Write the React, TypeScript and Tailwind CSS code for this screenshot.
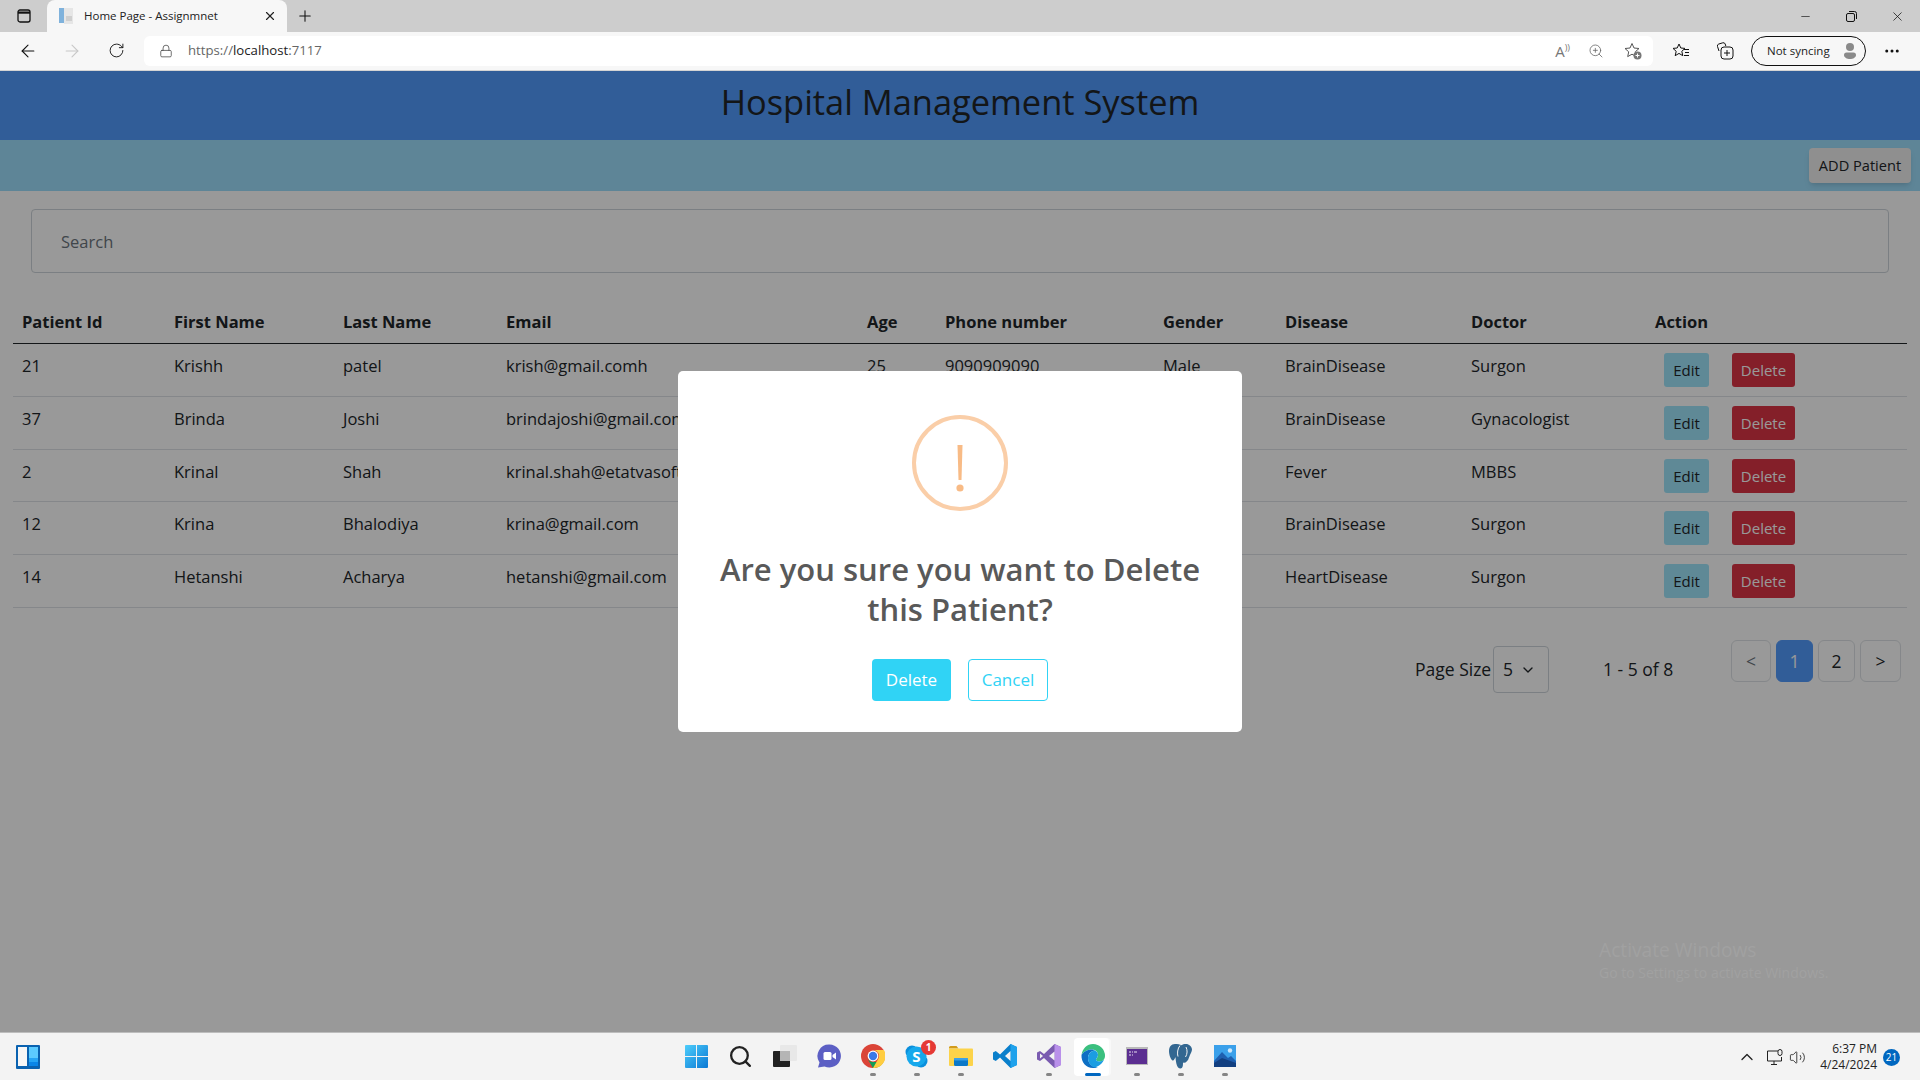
import { ArrowLeft, ArrowRight, ChevronDown, ChevronUp, Lock, Minus, MoreHorizontal, Plus, RotateCw, Search, Volume2, X, ZoomIn } from 'lucide-react';

const patients = [
  { id: 21, first: 'Krishh', last: 'patel', email: 'krish@gmail.comh', age: '25', phone: '9090909090', gender: 'Male', disease: 'BrainDisease', doctor: 'Surgon' },
  { id: 37, first: 'Brinda', last: 'Joshi', email: 'brindajoshi@gmail.com', disease: 'BrainDisease', doctor: 'Gynacologist' },
  { id: 2, first: 'Krinal', last: 'Shah', email: 'krinal.shah@etatvasoft.com', disease: 'Fever', doctor: 'MBBS' },
  { id: 12, first: 'Krina', last: 'Bhalodiya', email: 'krina@gmail.com', disease: 'BrainDisease', doctor: 'Surgon' },
  { id: 14, first: 'Hetanshi', last: 'Acharya', email: 'hetanshi@gmail.com', disease: 'HeartDisease', doctor: 'Surgon' },
];

const headers = ['Patient Id', 'First Name', 'Last Name', 'Email', 'Age', 'Phone number', 'Gender', 'Disease', 'Doctor', 'Action'];

function TabStrip() {
  return (
    <div className="flex h-8 bg-[#cdcdcd] pl-[6px]">
      <div className="flex w-9 items-center justify-center">
        <svg width="16" height="16" viewBox="0 0 16 16" fill="none" stroke="#111" strokeWidth="1.3">
          <rect x="2" y="2" width="12" height="12" rx="2" />
          <path d="M2 4.6h12" strokeWidth="2.2" />
        </svg>
      </div>
      <div className="ml-[5px] flex w-[240px] items-center rounded-t-lg bg-[#f7f7f7] pl-[11px] pr-[10px]">
        <svg width="16" height="18" viewBox="0 0 16 18">
          <rect x="1" y="1" width="5" height="15" fill="#7fb2dc" />
          <rect x="6" y="1" width="9" height="16" fill="#e6e6e6" />
          <rect x="8" y="9" width="6" height="5" fill="#cfcfcf" />
        </svg>
        <span className="ml-[10px] flex-1 text-[11.5px] text-[#222]">Home Page - Assignmnet</span>
        <X size={14} strokeWidth={2} className="text-[#222]" />
      </div>
      <div className="flex w-9 items-center justify-center">
        <Plus size={18} strokeWidth={1.4} className="text-[#111]" />
      </div>
      <div className="flex-1" />
      <div className="flex w-[46px] items-center justify-center"><Minus size={13} strokeWidth={1.2} className="text-[#111]" /></div>
      <div className="flex w-[46px] items-center justify-center">
        <svg width="11" height="11" viewBox="0 0 11 11" fill="none" stroke="#111">
          <rect x="0.5" y="2.5" width="8" height="8" rx="1.5" />
          <path d="M3 .5h5.5a2 2 0 0 1 2 2V8" />
        </svg>
      </div>
      <div className="flex w-[46px] items-center justify-center"><X size={15} strokeWidth={1.2} className="text-[#111]" /></div>
    </div>
  );
}

function Toolbar() {
  return (
    <div className="flex h-[39px] items-center border-b border-[#d4d4d4] bg-[#f7f7f7] pb-[1px] pl-[6px] pr-[6px]">
      <div className="flex w-11 justify-center"><ArrowLeft size={20} strokeWidth={1.3} className="text-[#111]" /></div>
      <div className="flex w-11 justify-center"><ArrowRight size={20} strokeWidth={1.3} className="text-[#c8c8c8]" /></div>
      <div className="flex w-11 justify-center"><RotateCw size={17} strokeWidth={1.3} className="text-[#111]" /></div>
      <div className="ml-[6px] flex h-[30px] w-[1509px] items-center rounded-md bg-white pl-[15px]">
        <Lock size={14} strokeWidth={1.3} className="text-[#444]" />
        <span className="ml-[15px] flex-1 text-[13.2px] text-[#666]">https://<span className="text-[#222]">localhost</span>:7117</span>
        <span className="mr-[18px] text-[15px] leading-none text-[#777]">A<span className="text-[9px] align-super">))</span></span>
        <ZoomIn size={16} strokeWidth={1.2} className="mr-[20px] text-[#666]" />
        <svg width="18" height="18" viewBox="0 0 18 18" className="mr-[11px]" fill="none" stroke="#555">
          <path d="M8 1.5l2 4.5 5 .5-3.7 3.3 1 4.8L8 12.2l-4.3 2.4 1-4.8L1 6.5 6 6z" />
          <circle cx="13.5" cy="13.5" r="4" fill="#777" stroke="none" />
          <path d="M13.5 11.5v4M11.5 13.5h4" stroke="#fff" />
        </svg>
      </div>
      <div className="ml-[6px] flex w-11 justify-center">
        <svg width="18" height="18" viewBox="0 0 18 18" fill="none" stroke="#111">
          <path d="M7 2l1.8 4 4.2.4-3.2 2.9 1 4.4L7 11.4l-3.8 2.3 1-4.4L1 6.4 5.2 6z" />
          <path d="M12 7.5h5M13 10.5h4M12 13.5h5" />
        </svg>
      </div>
      <div className="flex w-11 justify-center">
        <svg width="18" height="18" viewBox="0 0 18 18" fill="none" stroke="#111">
          <path d="M3 9L1.500 4.500a2 2 0 0 1 1.300-2.500l4-1.200a2 2 0 0 1 2.400 1.200L9.800 4" />
          <rect x="5" y="5" width="12" height="12" rx="3" fill="#f7f7f7" />
          <path d="M11 8v6M8 11h6" />
        </svg>
      </div>
      <div className="ml-1 flex h-[30px] w-[115px] items-center rounded-full border border-[#111] pl-[15px]">
        <span className="flex-1 text-[11.5px] text-[#222]">Not syncing</span>
        <svg width="16" height="18" viewBox="0 0 16 18" className="mr-[7px]" fill="#8a8a8a">
          <circle cx="8" cy="5" r="4" />
          <path d="M2 13a2.500 2.500 0 0 1 2.500-2.500h7A2.500 2.500 0 0 1 14 13c0 2.500-3 4-6 4s-6-1.500-6-4z" />
        </svg>
      </div>
      <div className="ml-1 flex w-11 justify-center"><MoreHorizontal size={18} strokeWidth={2} className="text-[#111]" /></div>
    </div>
  );
}

function PatientRow({ p }: { p: (typeof patients)[number] }) {
  return (
    <tr className="h-[52.8px] border-b border-[#dee2e6] align-top">
      <td className="pl-[9px] pr-2 pt-2">{p.id}</td>
      <td className="px-2 pt-2">{p.first}</td>
      <td className="px-2 pt-2">{p.last}</td>
      <td className="whitespace-nowrap px-2 pt-2">{p.email}</td>
      <td className="px-2 pt-2">{p.age}</td>
      <td className="px-2 pt-2">{p.phone}</td>
      <td className="px-2 pt-2">{p.gender}</td>
      <td className="px-2 pt-2">{p.disease}</td>
      <td className="px-2 pt-2">{p.doctor}</td>
      <td className="px-2 pt-[9px]">
        <div className="ml-[9px] flex gap-[23px] text-[15px]">
          <button className="h-[34px] w-[45px] rounded-[3px] bg-[#9fe4fb] pt-[1px] text-[#212529]">Edit</button>
          <button className="h-[34px] w-[63px] rounded-[3px] bg-[#dc3545] pt-[1px] text-white">Delete</button>
        </div>
      </td>
    </tr>
  );
}

function PageButton({ label, active, muted, w }: { label: string; active?: boolean; muted?: boolean; w: string }) {
  return (
    <button className={`${w} h-[42px] rounded-md border ${active ? 'border-[#539bfd] bg-[#539bfd] text-white' : 'border-[#dee2e6] bg-white'} ${muted ? 'text-[#6c757d]' : ''}`}>
      {label}
    </button>
  );
}

function DeleteModal() {
  return (
    <div className="absolute left-[678px] top-[300px] flex h-[361px] w-[564px] flex-col items-center rounded-[5px] bg-white pt-[44px]">
      <svg width="96" height="96" viewBox="0 0 96 96" fill="none">
        <circle cx="48" cy="48" r="46" stroke="#facea8" strokeWidth="4" />
        <path d="M45.500 30h5l-1 35h-3z" fill="#f8bb86" />
        <circle cx="48" cy="73" r="3.600" fill="#f8bb86" />
      </svg>
      <h2 className="mt-[38px] w-[520px] text-center text-[31px] font-semibold leading-[40px] text-[#595959]">
        Are you sure you want to Delete this Patient?
      </h2>
      <div className="mt-[30px] flex gap-[17px] text-[17px]">
        <button className="h-[42px] w-[79px] rounded-[4px] bg-[#30d3f5] text-white">Delete</button>
        <button className="h-[42px] w-[80px] rounded-[4px] border border-[#30d3f5] text-[#30d3f5]">Cancel</button>
      </div>
    </div>
  );
}

function TaskIcon({ children, dot, active }: { children: React.ReactNode; dot?: boolean; active?: boolean }) {
  return (
    <div className="relative flex h-12 w-11 items-center justify-center">
      {active && <div className="absolute left-[3px] top-[5px] h-[38px] w-[35px] rounded bg-white shadow-[2px_0_0_#f9f9f9]" />}
      <div className="relative -mt-[2px]">{children}</div>
      {dot && <div className="absolute bottom-[5px] left-[19px] h-[3px] w-[6px] rounded-full bg-[#858585]" />}
      {active && <div className="absolute bottom-[5px] left-[14px] h-[3px] w-4 rounded-full bg-[#0067c0]" />}
    </div>
  );
}

function Taskbar() {
  return (
    <div className="grid h-12 grid-cols-[1fr_auto_1fr] border-t border-[#bdbdbd] bg-[#f3f3f3]">
      <div className="flex items-center pl-4">
        <svg width="24" height="24" viewBox="0 0 24 24">
          <rect width="24" height="24" rx="1" fill="#0a62b0" />
          <rect x="2" y="2" width="9" height="19" fill="#f6f6f6" />
          <rect x="13" y="2" width="9" height="11" fill="#5ccbff" />
          <rect x="13" y="13" width="9" height="4" fill="#25a5f5" />
          <rect x="13" y="17" width="9" height="4" fill="#0a86e8" />
        </svg>
      </div>
      <div className="ml-[1px] flex">
        <TaskIcon>
          <svg width="23" height="23" viewBox="0 0 23 23">
            <defs>
              <linearGradient id="win" x1="0" y1="0" x2="1" y2="1"><stop offset="0" stopColor="#4dcdfb" /><stop offset="1" stopColor="#0a78d4" /></linearGradient>
            </defs>
            <path d="M0 1a1 1 0 0 1 1-1h10v11H0zM12 0h10a1 1 0 0 1 1 1v10H12zM0 12h11v11H1a1 1 0 0 1-1-1zM12 12h11v10a1 1 0 0 1-1 1H12z" fill="url(#win)" />
          </svg>
        </TaskIcon>
        <TaskIcon>
          <Search size={25} strokeWidth={2.2} className="text-[#222]" />
        </TaskIcon>
        <TaskIcon>
          <svg width="24" height="22" viewBox="0 0 24 22">
            <rect x="7" y="0" width="17" height="16" rx="1" fill="#e8e8e8" />
            <rect x="0" y="6" width="17" height="16" rx="1" fill="#222" />
            <rect x="7" y="6" width="10" height="10" fill="#b5b5b5" />
          </svg>
        </TaskIcon>
        <TaskIcon>
          <svg width="24" height="24" viewBox="0 0 24 24">
            <path d="M12.500 0.500a11.500 11.500 0 1 1-5 21.900L1 23.500l1.500-5A11.500 11.500 0 0 1 12.500 0.500z" fill="#5c5fc4" />
            <rect x="6.500" y="8" width="8" height="8" rx="1.500" fill="#fff" />
            <path d="M15.500 11l3.500-2.500v7L15.500 13z" fill="#fff" />
          </svg>
        </TaskIcon>
        <TaskIcon dot>
          <svg width="24" height="24" viewBox="0 0 24 24">
            <circle cx="12" cy="12" r="12" fill="#db4437" />
            <path d="M1.600 6.200L7 15.500l-.1.100L12 24a12 12 0 0 0 10.400-6L12 18a6 6 0 0 1-5.200-3z" fill="#0f9d58" />
            <path d="M12 24l5.200-9A6 6 0 0 0 12 6h10.900A12 12 0 0 1 12 24z" fill="#ffcd40" />
            <circle cx="12" cy="12" r="5.400" fill="#fff" />
            <circle cx="12" cy="12" r="4.200" fill="#3b78e7" />
          </svg>
        </TaskIcon>
        <TaskIcon dot>
          <div className="relative">
            <svg width="23" height="23" viewBox="0 0 23 23">
              <circle cx="7" cy="7" r="6.500" fill="#0a8fdc" />
              <circle cx="16" cy="16" r="6.500" fill="#0a8fdc" />
              <circle cx="11.500" cy="11.500" r="10" fill="#16a8ec" />
            </svg>
            <span className="absolute inset-0 flex items-center justify-center text-[15px] font-bold leading-none text-white">S</span>
            <span className="absolute -right-[8px] -top-[5px] flex h-[15px] w-[15px] items-center justify-center rounded-full bg-[#e53935] text-[10px] font-bold text-white">1</span>
          </div>
        </TaskIcon>
        <TaskIcon dot>
          <svg width="24" height="20" viewBox="0 0 24 20">
            <path d="M0 1.500A1.500 1.500 0 0 1 1.500 0h6l2 2.500H0z" fill="#d29b1c" />
            <rect y="2.500" width="24" height="17.500" rx="1" fill="#fcd34a" />
            <rect x="5" y="12" width="14" height="8" rx="1.500" fill="#0b78c8" />
            <rect x="5" y="12" width="14" height="2.500" rx="1" fill="#3aa0e8" />
          </svg>
        </TaskIcon>
        <TaskIcon>
          <svg width="24" height="24" viewBox="0 0 24 24">
            <path d="M17.500 0L24 3v18l-6.500 3L7 13.500 2.800 17 0 15.500v-7L2.800 7 7 10.500z" fill="#0a7fcb" />
            <path d="M17.500 0L24 3v18l-6.500 3z" fill="#1fa2ec" />
            <path d="M17.500 7l-5.500 5 5.500 5z" fill="#f3f3f3" />
          </svg>
        </TaskIcon>
        <TaskIcon dot>
          <svg width="24" height="24" viewBox="0 0 24 24">
            <path d="M17.500 0L24 3v18l-6.500 3L7 14l-4 3-3-1.500v-7L3 7l4 3z" fill="#7a5bb0" />
            <path d="M17.500 0L24 3v18l-6.500 3z" fill="#b990ea" />
            <path d="M17.500 7.500L12 12l5.500 4.500z" fill="#f3f3f3" />
            <path d="M3 9.500v5L6 12z" fill="#f3f3f3" />
          </svg>
        </TaskIcon>
        <TaskIcon active>
          <svg width="24" height="24" viewBox="0 0 24 24">
            <path d="M12 0a12 12 0 0 1 12 12c0 3.500-2.500 5.500-5.500 5.500-2 0-3.500-1-3.500-2 0-1 2-2 2-4.500 0-3.500-3-5.500-6.500-5.500C6 5.500 2 8 0.500 11 1.500 4.500 6 0 12 0z" fill="#3bc07f" />
            <path d="M0.500 11C2 8 6 5.500 10.500 5.500c1.500 0 2.500.3 3.500.9C10 6.500 7 10 7 14c0 5 4 9.500 10 9.500-1.500.4-3.200.5-5 .5C5 24 0 18 0.500 11z" fill="#0d6fc4" />
            <path d="M7 14c0-4 3-7.500 7-7.600 2 1 3 3 3 4.600 0 2.500-2 3.500-2 4.500 0 1 1.500 2 3.500 2 1.800 0 3.500-.7 4.500-2-1.500 4-5 7-9.500 7.900C10.500 23 7 19 7 14z" fill="#1b9de2" />
          </svg>
        </TaskIcon>
        <TaskIcon dot>
          <svg width="22" height="18" viewBox="0 0 22 18">
            <rect width="22" height="18" fill="#b9b9b9" />
            <rect x="1" y="2" width="20" height="15" fill="#5b2e91" />
            <path d="M3 5h2M6 5h1M8 5h3M3 8h2M6 8h1" stroke="#e8e0f0" />
          </svg>
        </TaskIcon>
        <TaskIcon dot>
          <svg width="23" height="25" viewBox="0 0 23 25">
            <path d="M6 0C2 0 0 3 0 7c0 4 2 9 3.500 9.500C5 17 6 14 6.500 13c.2 3 .8 11 4.500 11.500 3 .3 3-3 3-6 2 1 5-1 6-5 1.500-4 3-6 3-8 0-3-3-5.500-6-5.500-2 0-3.500 .6-4.500 1.200C11 .5 8.500 0 6 0z" fill="#336791" />
            <path d="M11 1.500c-2.500 3-3 8-2 11M17 3c1.500 3 1.500 7-.5 10" stroke="#f3f3f3" fill="none" />
          </svg>
        </TaskIcon>
        <TaskIcon dot>
          <svg width="22" height="22" viewBox="0 0 22 22">
            <rect width="22" height="22" fill="#3aa0ea" />
            <circle cx="16" cy="5.500" r="2.200" fill="#cfe8fb" />
            <path d="M0 16L8 7l6 6 3-2 5 5v6H0z" fill="#1e5fb0" />
            <path d="M0 18l8-5 14 5v4H0z" fill="#123f80" />
          </svg>
        </TaskIcon>
      </div>
      <div className="flex items-center justify-end">
        <ChevronUp size={20} strokeWidth={1.6} className="mr-[9px] text-[#222]" />
        <svg width="18" height="17" viewBox="0 0 18 17" className="mr-[5px]" fill="none" stroke="#222">
          <path d="M12 2H1.500v10h14V8" />
          <path d="M5 15.500h6M8 12v3.500" />
          <rect x="12" y="0.500" width="4" height="6" rx="2" />
        </svg>
        <Volume2 size={17} strokeWidth={1.2} className="mr-[14px] text-[#222]" />
        <div className="text-right text-[12px] leading-[16px] text-[#222]">
          <div>6:37 PM</div>
          <div>4/24/2024</div>
        </div>
        <div className="ml-[6px] mr-5 flex h-[17px] w-[17px] items-center justify-center rounded-full bg-[#0067c0] text-[10px] text-white">21</div>
      </div>
    </div>
  );
}

export default function App() {
  return (
    <div className="flex h-screen flex-col overflow-hidden bg-white font-['Open_Sans',sans-serif] text-[#212529]">
      <TabStrip />
      <Toolbar />

      <main className="relative flex-1 overflow-hidden text-[16.5px]">
        <header className="flex h-[69px] items-start justify-center bg-[#539bfd] pt-[7px]">
          <h1 className="text-[34.4px] font-medium leading-[48px] text-[#212529]">Hospital Management System</h1>
        </header>
        <div className="flex h-[51px] items-center justify-end bg-[#9ddefc] pr-[9px]">
          <button className="h-[35px] w-[102px] rounded-[4px] bg-[#eeeeee] pt-[1px] text-[14.6px] shadow-md">ADD Patient</button>
        </div>

        <div className="ml-[31px] mr-[31px] mt-[18px]">
          <input
            placeholder="Search"
            className="h-[64px] w-full rounded-[4px] border border-[#ced4da] pl-[29px] placeholder:text-[#6c757d]"
          />
        </div>

        <table className="ml-[13px] mt-[27px] w-[1894px] table-fixed border-collapse text-left leading-[27px]">
          <colgroup>
            <col className="w-[153px]" />
            <col className="w-[169px]" />
            <col className="w-[163px]" />
            <col className="w-[361px]" />
            <col className="w-[78px]" />
            <col className="w-[218px]" />
            <col className="w-[122px]" />
            <col className="w-[186px]" />
            <col className="w-[184px]" />
            <col className="w-[260px]" />
          </colgroup>
          <thead>
            <tr className="h-[43.6px] border-b border-[#212529]">
              {headers.map((h) => (
                <th key={h} className="px-2 font-bold first:pl-[9px]">{h}</th>
              ))}
            </tr>
          </thead>
          <tbody>
            {patients.map((p) => (
              <PatientRow key={p.id} p={p} />
            ))}
          </tbody>
        </table>

        <div className="mt-[32px] flex items-start justify-end pr-[19px] text-[17.5px]">
          <div className="mt-[6px] flex h-[47px] items-center">
            <span className="w-[78px]">Page Size</span>
            <div className="flex h-[47px] w-[56px] items-center rounded-[4px] border border-[#ced4da] pl-[9px]">
              5<ChevronDown size={16} strokeWidth={2} className="ml-[7px]" />
            </div>
            <span className="ml-[54px] w-[128px]">1 - 5 of 8</span>
          </div>
          <div className="flex gap-[5px]">
            <PageButton label="<" muted w="w-[40px]" />
            <PageButton label="1" active w="w-[37px]" />
            <PageButton label="2" w="w-[37px]" />
            <PageButton label=">" w="w-[41px]" />
          </div>
        </div>

        {/* modal backdrop */}
        <div className="absolute inset-0 bg-black/40" />
        <DeleteModal />

        <div className="absolute left-[1599px] top-[866px] text-[#a1a1a1]">
          <div className="text-[19.2px] leading-[26px]">Activate Windows</div>
          <div className="text-[14px] leading-[20px]">Go to Settings to activate Windows.</div>
        </div>
      </main>

      <Taskbar />
    </div>
  );
}
